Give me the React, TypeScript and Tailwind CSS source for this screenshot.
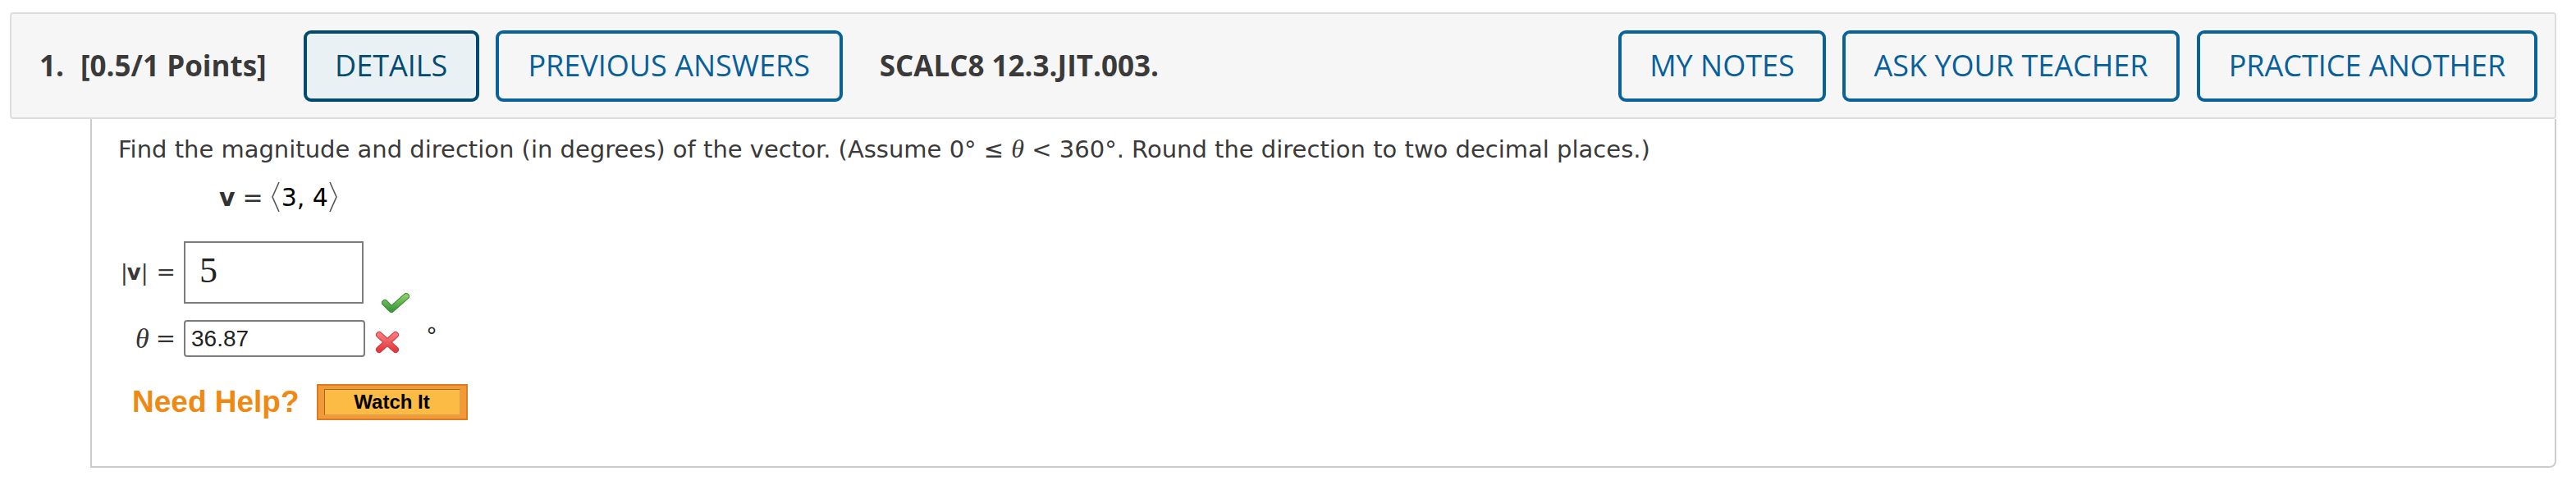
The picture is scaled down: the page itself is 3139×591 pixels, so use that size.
import React from "react";

function Angle({ right = false }: { right?: boolean }) {
  return (
    <svg width="12" height="38" viewBox="0 0 12 38" className="shrink-0">
      <polyline
        points={right ? "2,1 10,19 2,37" : "10,1 2,19 10,37"}
        fill="none"
        stroke="#555"
        strokeWidth="1.6"
      />
    </svg>
  );
}

function Check() {
  return (
    <svg width="34" height="26" viewBox="0 0 34 26" className="shrink-0 ml-[22px] mt-[62px] -mb-[12px]">
      <defs>
        <linearGradient id="cg" x1="0" y1="0" x2="0" y2="1">
          <stop offset="0" stopColor="#86cc63" />
          <stop offset="1" stopColor="#3f9a3c" />
        </linearGradient>
      </defs>
      <path d="M4 13 L12 21 L30 5" fill="none" stroke="#3b8a36" strokeWidth="8" strokeLinecap="round" strokeLinejoin="round" />
      <path d="M4 13 L12 21 L30 5" fill="none" stroke="url(#cg)" strokeWidth="6" strokeLinecap="round" strokeLinejoin="round" />
    </svg>
  );
}

function Cross() {
  return (
    <svg width="30" height="28" viewBox="0 0 30 28" className="shrink-0 ml-[12px] mt-[13px]">
      <defs>
        <linearGradient id="xg" x1="0" y1="0" x2="0" y2="1">
          <stop offset="0" stopColor="#f7787a" />
          <stop offset="1" stopColor="#e23c42" />
        </linearGradient>
      </defs>
      <path d="M5 5 L25 23 M25 5 L5 23" fill="none" stroke="#d2353b" strokeWidth="8" strokeLinecap="round" />
      <path d="M5 5 L25 23 M25 5 L5 23" fill="none" stroke="url(#xg)" strokeWidth="6" strokeLinecap="round" />
    </svg>
  );
}

export default function App() {
  const btnBase =
    "h-[87px] border-[4px] rounded-[9px] flex items-center justify-center text-[36px] font-['Open_Sans',sans-serif] shrink-0";
  const btn = btnBase + " border-[#08639b] text-[#07609a]";
  return (
    <div className="w-[3139px] h-[591px] bg-white overflow-hidden pt-[15px] pl-[12px]">
      <div className="w-[3103px]">
        {/* header */}
        <div className="h-[130px] border-2 border-[#dddddd] rounded-[4px] bg-[#f6f6f6] flex items-center pl-[34px] pr-[21px] font-['Open_Sans',sans-serif] text-[#3a3a3a]">
          <span className="text-[35px] font-bold">1.</span>
          <span className="text-[35px] font-bold ml-[20px]">[0.5/1 Points]</span>
          <div className={btnBase + " ml-[45px] w-[214px] border-[#034a6f] bg-[#e9f1f5] text-[#034a70]"}>DETAILS</div>
          <div className={btn + " ml-[20px] w-[423px]"}>PREVIOUS ANSWERS</div>
          <span className="text-[35px] font-bold ml-[45px]">SCALC8 12.3.JIT.003.</span>
          <div className="flex-1" />
          <div className={btn + " w-[253px]"}>MY NOTES</div>
          <div className={btn + " ml-[20px] w-[411px]"}>ASK YOUR TEACHER</div>
          <div className={btn + " ml-[21px] w-[415px]"}>PRACTICE ANOTHER</div>
        </div>
        {/* content */}
        <div className="ml-[98px] h-[425px] border-l-2 border-r-2 border-b-2 border-[#cccccc] rounded-br-[8px] pt-[15px] pl-[32px]">
          <div className="font-['DejaVu_Sans',Verdana,sans-serif] text-[29px] leading-[42px] text-[#3a3a3a] whitespace-nowrap">
            Find the magnitude and direction (in degrees) of the vector. (Assume 0° ≤{" "}
            <span className="font-['Liberation_Serif',serif] italic text-[32px]">θ</span> &lt; 360°. Round the direction to two decimal places.)
          </div>
          <div className="mt-[17px] ml-[123px] flex items-center h-[40px] font-['DejaVu_Sans',sans-serif] text-[30px] text-black">
            <span className="font-bold text-[#333]">v</span>
            <span className="ml-[9px] text-[#333]">=</span>
            <span className="ml-[9px] flex items-center">
              <Angle />
            </span>
            <span className="ml-[1px]">3, 4</span>
            <Angle right />
          </div>
          {/* row 1 */}
          <div className="mt-[34px] flex items-start">
            <div className="w-[70px] h-[76px] flex items-center justify-end font-['DejaVu_Sans',sans-serif] text-[#3a3a3a] whitespace-nowrap">
              <span className="text-[26px] tracking-[-1px]">|</span>
              <span className="text-[26px] font-bold">v</span>
              <span className="text-[26px]">|</span>
              <span className="ml-[10px] text-[28px]">=</span>
            </div>
            <div className="ml-[10px] w-[219px] h-[76px] border-2 border-[#7d7d7d] bg-white pl-[17px] pt-[4px] font-['Liberation_Serif',serif] text-[44px] leading-[60px] text-[#222]">
              5
            </div>
            <Check />
          </div>
          {/* row 2 */}
          <div className="mt-[20px] flex items-start">
            <div className="w-[70px] h-[45px] flex items-center justify-end whitespace-nowrap text-[#333]">
              <span className="font-['Liberation_Serif',serif] italic text-[34px]">θ</span>
              <span className="ml-[8px] font-['DejaVu_Sans',sans-serif] text-[29px]">=</span>
            </div>
            <div className="ml-[10px] w-[221px] h-[45px] border-2 border-[#7d7d7d] rounded-[4px] bg-white pl-[7px] flex items-center font-['Liberation_Sans',Arial,sans-serif] text-[28px] text-[#222]">
              36.87
            </div>
            <Cross />
            <span className="ml-[33px] mt-[4px] font-['Liberation_Sans',Arial,sans-serif] text-[30px] leading-[30px] text-[#222]">°</span>
          </div>
          {/* row 3 */}
          <div className="mt-[33px] flex items-center h-[44px]">
            <span className="ml-[17px] font-['Liberation_Sans',Arial,sans-serif] font-bold text-[37px] text-[#ee8a14]">Need Help?</span>
            <div className="ml-[21px] w-[184px] h-[44px] border-2 border-[#d97c26] bg-[#f29a35] px-[7px] py-[4px]">
              <div className="h-full border border-t-[#9a6a2c] border-l-[#9a6a2c] border-b-[#d9a050] border-r-[#d9a050] bg-[#fbbb44] flex items-center justify-center font-['Liberation_Sans',Arial,sans-serif] font-bold text-[24px] text-black">
                Watch It
              </div>
            </div>
          </div>
        </div>
      </div>
    </div>
  );
}
